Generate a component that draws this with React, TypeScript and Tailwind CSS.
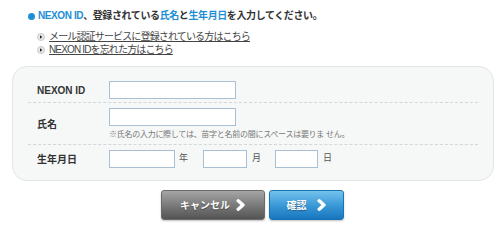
import type React from "react";

const font = "font-['Liberation_Sans','Noto_Sans_CJK_JP',sans-serif]";

const LinkIcon: React.FC = () => (
	<svg width="8" height="8" viewBox="0 0 8 8" className="shrink-0">
		<circle cx="4" cy="4" r="3.6" fill="#e6e6e6" stroke="#b5b5b5" strokeWidth="0.6" />
		<path d="M3 2.2 L5.3 4 L3 5.8 Z" fill="#222" />
	</svg>
);

const Chevron: React.FC = () => (
	<svg width="10" height="12" viewBox="0 0 10 12" className="shrink-0">
		<path
			d="M2.2 1.8 L7 6 L2.2 10.2"
			fill="none"
			stroke="#fff"
			strokeWidth="3.4"
			strokeLinecap="round"
			strokeLinejoin="round"
		/>
	</svg>
);

const Field: React.FC<{ w: string }> = ({ w }) => (
	<div className={`${w} h-[18px] shrink-0 border border-[#a9bfd3] bg-white`} />
);

const App: React.FC = () => {
	return (
		<div className={`w-[499px] h-[225px] bg-white text-[#333] overflow-hidden ${font}`}>
			<div className="pl-[28px] pt-[10px] flex items-center h-[23px] pb-[1px] text-[10px] font-bold leading-[12px] tracking-[-0.4px]">
				<span className="w-[7px] h-[7px] rounded-full bg-[#1e8fd6] mr-[3px]" />
				<span className="text-[#1e8fd6]">NEXON ID</span>
				<span>、登録されている</span>
				<span className="text-[#1e8fd6]">氏名</span>
				<span>と</span>
				<span className="text-[#1e8fd6]">生年月日</span>
				<span>を入力してください。</span>
			</div>
			<div className="pl-[37px] pt-[7px] flex flex-col text-[10px] leading-[13px] tracking-[-0.85px] text-[#444]">
				<div className="flex items-center gap-[4px]">
					<LinkIcon />
					<span className="underline underline-offset-1">メール認証サービスに登録されている方はこちら</span>
				</div>
				<div className="flex items-center gap-[4px]">
					<LinkIcon />
					<span className="underline underline-offset-1">NEXON IDを忘れた方はこちら</span>
				</div>
			</div>
			<div className="ml-[12px] mt-[10px] w-[482px] h-[115px] rounded-[15px] border border-[#e3e6e6] bg-[#f6f8f8] px-[15px]">
				<div className="flex items-center pt-[14px] pb-[3px] border-b border-dashed border-[#d4d7d7]">
					<div className="w-[81px] pl-[9px] text-[10px] font-bold">NEXON ID</div>
					<Field w="w-[127px]" />
				</div>
				<div className="flex items-center pt-[5px] pb-[3px] border-b border-dashed border-[#d4d7d7]">
					<div className="w-[81px] pl-[9px] text-[10px] font-bold">氏名</div>
					<div className="flex flex-col">
						<Field w="w-[127px]" />
						<div className="mt-[3px] text-[8px] leading-[12px] tracking-[-0.27px] text-[#777] whitespace-nowrap">
							※氏名の入力に際しては、苗字と名前の間にスペースは要りま せん。
						</div>
					</div>
				</div>
				<div className="flex items-center pt-[5px]">
					<div className="w-[81px] pl-[9px] text-[10px] font-bold">生年月日</div>
					<Field w="w-[66px]" />
					<span className="ml-[4px] w-[24px] text-[9px] text-[#555]">年</span>
					<Field w="w-[44px]" />
					<span className="ml-[5px] w-[23px] text-[9px] text-[#555]">月</span>
					<Field w="w-[43px]" />
					<span className="ml-[5px] text-[9px] text-[#555]">日</span>
				</div>
			</div>
			<div className="mt-[9px] flex pl-[161px] gap-[4px]">
				<button className="w-[104px] h-[30px] rounded-[3px] border border-[#6a6a6a] bg-gradient-to-b from-[#a6a6a6] via-[#7b7b7b] to-[#545454] shadow-[0_1px_2px_rgba(0,0,0,0.25)] flex items-center justify-center gap-[6px] text-white text-[10px] font-bold [text-shadow:0_1px_1px_rgba(0,0,0,0.4)]">
					<span>キャンセル</span>
					<Chevron />
				</button>
				<button className="w-[75px] h-[30px] rounded-[3px] border border-[#1a74b3] bg-gradient-to-b from-[#73c2ec] via-[#3b9ad8] to-[#1676be] shadow-[0_1px_2px_rgba(0,0,0,0.25)] flex items-center justify-center gap-[10px] text-white text-[10px] font-bold [text-shadow:0_1px_1px_rgba(0,0,0,0.35)]">
					<span>確認</span>
					<Chevron />
				</button>
			</div>
		</div>
	);
};

export default App;
